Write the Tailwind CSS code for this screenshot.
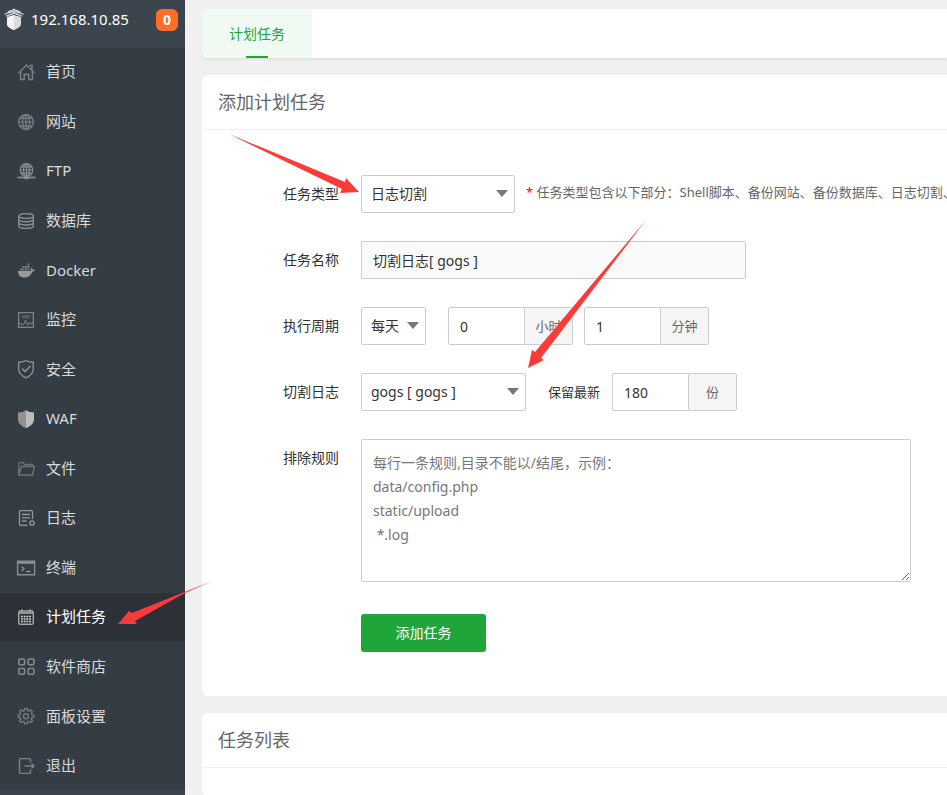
<!DOCTYPE html>
<html lang="zh-CN">
<head>
  <meta charset="UTF-8" />
  <title>计划任务</title>
  <script src="https://cdn.jsdelivr.net/npm/@tailwindcss/browser@4"></script>
</head>
<body class="relative flex min-h-screen overflow-x-hidden bg-[#f0f0f0] font-['Noto_Sans','Noto_Sans_CJK_SC',sans-serif] text-sm text-[#333]">
  <!-- Sidebar -->
  <aside class="flex w-[185px] shrink-0 flex-col bg-[#3c444d] pb-1.5 text-[#d8dadc]">
    <div class="flex h-12 items-start pt-2 pl-1 pr-[7px]">
      <svg class="h-[22px] w-5 shrink-0" viewBox="0 0 20 22" fill="none">
        <path d="M3 8.500 10 7l7 1.500V16c0 3-3.500 4.500-7 6-3.500-1.500-7-3-7-6z" fill="#dcdcdc" />
        <path d="M10 7v15c-3.500-1.500-7-3-7-6V8.500z" fill="#f4f4f4" />
        <path d="M1 9.300 10 6l9 3.300" stroke="#3c444d" stroke-width="1.200" />
        <path d="M3.500 4 10 1.500 16.500 4M.5 6.200 10 3l9.500 3.200M2 8.300l8-3 8 3" stroke="#eee" stroke-width="1.100" />
        <path d="m6 2.500 9 4M14 2.500l-9 4M10 .5v5" stroke="#d0d0d0" stroke-width=".8" />
      </svg>
      <span class="ml-[7px] text-[15px] leading-[22px] text-white">192.168.10.85</span>
      <a href="#" class="mt-px ml-auto h-[22px] w-[22px] rounded-md bg-[#ff6d27] text-center text-sm leading-[22px] font-bold text-white">0</a>
    </div>

    <nav class="flex flex-1 flex-col justify-between bg-[#353d44] text-[15px]">
      <a href="#" class="flex h-12 items-center gap-3 pl-[18px]">
        <svg class="size-4 overflow-visible" viewBox="0 0 16 16" fill="none" stroke="#7d8286" stroke-width="1.400"><path d="M.5 9 8.500 1l8 8M2.600 7.500v8h3.600v-5h4.600v5h3.600v-8M11.500 1.500h2.500v4" /></svg>
        首页
      </a>
      <a href="#" class="flex h-12 items-center gap-3 pl-[18px]">
        <svg class="size-4" viewBox="0 0 16 16" fill="none" stroke="#7d8286" stroke-width="1.200"><circle cx="8" cy="8" r="7.400" /><ellipse cx="8" cy="8" rx="3.500" ry="7.400" /><path d="M8 .5v15M.5 8h15M1.700 4.200h12.600M1.700 11.800h12.600" /></svg>
        网站
      </a>
      <a href="#" class="flex h-12 items-center gap-3 pl-[18px]">
        <svg class="size-4 overflow-visible" viewBox="0 0 16 16" fill="none" stroke="#8a8e91" stroke-width="1.200"><circle cx="8.500" cy="7" r="6.300" /><ellipse cx="8.500" cy="7" rx="3" ry="6.300" /><path d="M8.500.5v14M2 7h13M3 3.800h11M3 10.200h11" /><path d="M-.5 14.500h18" stroke-width="1.800" /><path d="M6.500 15h4" stroke-width="2.400" /></svg>
        FTP
      </a>
      <a href="#" class="flex h-12 items-center gap-3 pl-[18px]">
        <svg class="size-4" viewBox="0 0 16 16" fill="none" stroke="#8a8e91" stroke-width="1.400"><ellipse cx="8" cy="3" rx="7.300" ry="2.400" /><path d="M.7 3v10c0 1.300 3.200 2.400 7.300 2.400s7.300-1.100 7.300-2.400V3M.7 6.300c0 1.300 3.200 2.400 7.300 2.400s7.300-1.100 7.300-2.400M.7 9.600C.7 11 3.900 12 8 12s7.300-1 7.300-2.400" /></svg>
        数据库
      </a>
      <a href="#" class="flex h-12 items-center gap-3 pl-[18px]">
        <svg class="size-4 overflow-visible" viewBox="0 0 16 16" fill="#999"><path d="M0 9h12.500c.7-.6.600-1.700.2-2.600l.8-.7c.8.600 1.200 1.200 1.300 2 .8-.2 1.700 0 2.200.3-.4 1-1.500 1.500-2.700 1.500-1.300 4-3.800 6-7.800 6S0 13.500 0 9z" /><path d="M2 6.500h2v2H2zM4.500 6.500h2v2h-2zM7 6.500h2v2H7zM9.500 6.500h2v2h-2zM4.500 4h2v2h-2zM7 4h2v2H7zM9.500 4h2v2h-2zM9.500 1.500h2v2h-2z" opacity=".7" /></svg>
        Docker
      </a>
      <a href="#" class="flex h-12 items-center gap-3 pl-[18px]">
        <svg class="size-4" viewBox="0 0 16 16" fill="none" stroke="#7d8286"><path d="M.6.6h14.800v14.800H.6z" stroke-width="1.400" /><path d="M4.500 3.500h7v2.500h-7z" fill="#555d63" stroke="#555d63" /><path d="M1 11.500h2l1 2 2-1.500L7.500 8l2 5.500 1.500-3 1.500 2 1-2H15" /></svg>
        监控
      </a>
      <a href="#" class="flex h-12 items-center gap-3 pl-[18px]">
        <svg class="size-4 overflow-visible" viewBox="0 0 16 16" fill="none" stroke="#8a8e91" stroke-width="1.400"><path d="M8-.5C6 .8 3.500 1.300.7 1.300V8c0 4.500 3.300 7 7.300 8.800 4-1.800 7.300-4.300 7.300-8.800V1.300C12.500 1.300 10 .8 8-.5z" /><path d="m4 7.500 3 3 5.500-5.500" stroke-width="1.700" /></svg>
        安全
      </a>
      <a href="#" class="flex h-12 items-center gap-3 pl-[18px]">
        <svg class="size-4 overflow-visible" viewBox="0 0 16 16"><path d="M8-1C6 .8 3 1.500 0 1.500V8c0 5 4 7.500 8 9z" fill="#929292" /><path d="M8-1c2 1.800 5 2.500 8 2.500V8c0 5-4 7.500-8 9z" fill="#bcbcbc" /></svg>
        WAF
      </a>
      <a href="#" class="flex h-12 items-center gap-3 pl-[18px]">
        <svg class="size-4 overflow-visible" viewBox="0 0 16 16" fill="none" stroke="#6d7377" stroke-width="1.400" stroke-linejoin="round"><path d="M.8 14V2.500c0-.5.400-.9 1-.9h3.500l1 1.900h7.200c.6 0 1 .4 1 1v1M.8 14 3.500 5.500h13L14.500 14z" /></svg>
        文件
      </a>
      <a href="#" class="flex h-12 items-center gap-3 pl-[18px]">
        <svg class="size-4 overflow-visible" viewBox="0 0 16 16" fill="none" stroke="#95989b" stroke-width="1.300"><path d="M9.500 15.300h-7c-.6 0-1-.4-1-1V1.700c0-.6.400-1 1-1h11c.6 0 1 .4 1 1V9M4 4.500h8M4 7.800h8M4 11h4.500" /><circle cx="14" cy="13" r="2.200" /></svg>
        日志
      </a>
      <a href="#" class="flex h-12 items-center gap-3 pl-[18px]">
        <svg class="size-4 overflow-visible" viewBox="0 0 16 16" fill="none" stroke="#8a8e91" stroke-width="1.400"><path d="M-.4 1.200h17v13.600h-17z" /><path d="M0 2.500h16" stroke-width="2.800" /><path d="m3.500 6.500 2.500 2.200L3.500 11M8 11.500h4.500" /></svg>
        终端
      </a>
      <a href="#" class="flex h-12 items-center gap-3 bg-[#2c3138] pl-[18px] text-white">
        <svg class="size-4" viewBox="0 0 16 16" fill="none" stroke="#a5a7a9" stroke-width="1.400"><rect x=".7" y="2" width="14.600" height="13.300" rx="1.500" /><path d="M.6 4h14.800" stroke-width="1.700" /><path d="M4 .3v3M12 .3v3" stroke-width="1.500" /><path d="M3 7.500h10M3 10h10M3 12.500h10" stroke-width="1.700" stroke-dasharray="1.800 .9" stroke="#ddd" /></svg>
        计划任务
      </a>
      <a href="#" class="flex h-12 items-center gap-3 pl-[18px]">
        <svg class="size-4 overflow-visible" viewBox="0 0 16 16" fill="none" stroke="#85898c" stroke-width="1.600"><rect x=".8" y="0" width="5.800" height="5.800" rx="1.200" /><rect x="10.200" y="0" width="5.800" height="5.800" rx="1.200" /><rect x=".8" y="9.500" width="5.800" height="5.800" rx="1.200" /><rect x="10.200" y="9.500" width="5.800" height="5.800" rx="1.200" /></svg>
        软件商店
      </a>
      <a href="#" class="flex h-12 items-center gap-3 pl-[18px]">
        <svg class="size-4 overflow-visible" viewBox="0 0 16 16" fill="none" stroke="#747a7e" stroke-width="1.400" stroke-linejoin="round"><path d="M6.700.5h2.600l.4 2 1.300.6 1.800-1.200 1.700 1.800L13.300 5.500l.5 1.200 2 .3v2.200l-2 .5-.5 1.300 1.200 1.700-1.800 1.800-1.700-1.200-1.300.6-.4 2H6.700l-.4-2-1.300-.6-1.700 1.200-1.800-1.800L2.700 11l-.5-1.300-2-.5V7l2-.3.500-1.200L1.500 3.700l1.700-1.800L5 3.100l1.300-.6z" /><circle cx="8" cy="8.200" r="2.500" /></svg>
        面板设置
      </a>
      <a href="#" class="flex h-12 items-center gap-3 pl-[18px]">
        <svg class="size-4 overflow-visible" viewBox="0 0 16 16" fill="none" stroke="#7d8286" stroke-width="1.400"><path d="M12.500 4.500V1.600c0-.6-.4-1-1-1h-9c-.6 0-1 .4-1 1v12.800c0 .6.400 1 1 1h9c.6 0 1-.4 1-1v-2.900M6.500 8h9M13.500 5.500 16 8l-2.500 2.500" /></svg>
        退出
      </a>
    </nav>
  </aside>

  <main class="min-w-0 flex-1 pt-[9px] pl-[17px]">
    <div class="flex rounded-l-md bg-white shadow-[0_2px_2px_rgba(0,0,0,0.06)]">
      <a href="#" class="flex h-[49px] w-[110px] flex-col items-center justify-between rounded-l-md bg-[#f0f9f2] pt-[3px] text-[#20a53a]">
        <span class="leading-[44px]">计划任务</span>
        <span class="h-0.5 w-[22px] shrink-0 bg-[#20a53a]"></span>
      </a>
    </div>

    <section class="mt-[17px] overflow-hidden rounded-l-md bg-white pb-11">
      <h2 class="border-b border-[#eee] pl-4 text-lg leading-[54px] text-[#666]">添加计划任务</h2>

      <form class="flex flex-col gap-7 pt-[45px]">
        <div class="flex h-[38px] items-center whitespace-nowrap">
          <label for="taskType" class="mr-[22px] w-[137px] shrink-0 text-right">任务类型</label>
          <div class="relative shrink-0">
            <select id="taskType" class="h-[38px] w-[154px] appearance-none rounded-xs border border-[#ccc] bg-white pl-[9px]">
              <option>日志切割</option>
            </select>
            <svg class="pointer-events-none absolute top-[15px] right-[7px] h-[7px] w-3" viewBox="0 0 12 7"><path d="M0 0h12L6 7z" fill="#777" /></svg>
          </div>
          <p class="ml-[11px] pb-1 text-[13px] text-[#666]"><span class="text-[#f00]">*</span> 任务类型包含以下部分：Shell脚本、备份网站、备份数据库、日志切割、释放内存</p>
        </div>

        <div class="flex h-[38px] items-center">
          <label for="taskName" class="mr-[22px] w-[137px] shrink-0 text-right">任务名称</label>
          <input id="taskName" type="text" readonly value="切割日志[ gogs ]" class="h-[38px] w-[385px] rounded-xs border border-[#ccc] bg-[#fafafa] px-[11px]" />
        </div>

        <div class="flex h-[38px] items-center">
          <label for="cycle" class="mr-[22px] w-[137px] shrink-0 text-right">执行周期</label>
          <div class="relative shrink-0">
            <select id="cycle" class="h-[38px] w-[65px] appearance-none rounded-xs border border-[#ccc] bg-white pl-[9px]">
              <option>每天</option>
            </select>
            <svg class="pointer-events-none absolute top-[15px] right-[7px] h-[7px] w-3" viewBox="0 0 12 7"><path d="M0 0h12L6 7z" fill="#777" /></svg>
          </div>
          <div class="ml-[22px] flex">
            <input id="hour" type="text" value="0" class="h-[38px] w-[77px] rounded-l-xs border border-[#ccc] px-[11px]" />
            <label for="hour" class="-ml-px h-[38px] w-[49px] rounded-r-xs border border-[#ccc] bg-[#f5f5f5] text-center text-[13px] leading-9 text-[#666]">小时</label>
          </div>
          <div class="ml-[11px] flex">
            <input id="minute" type="text" value="1" class="h-[38px] w-[77px] rounded-l-xs border border-[#ccc] px-[11px]" />
            <label for="minute" class="-ml-px h-[38px] w-[49px] rounded-r-xs border border-[#ccc] bg-[#f5f5f5] text-center text-[13px] leading-9 text-[#666]">分钟</label>
          </div>
        </div>

        <div class="flex h-[38px] items-center">
          <label for="site" class="mr-[22px] w-[137px] shrink-0 text-right">切割日志</label>
          <div class="relative shrink-0">
            <select id="site" class="h-[38px] w-[165px] appearance-none rounded-xs border border-[#ccc] bg-white pl-[9px]">
              <option>gogs [ gogs ]</option>
            </select>
            <svg class="pointer-events-none absolute top-[15px] right-[7px] h-[7px] w-3" viewBox="0 0 12 7"><path d="M0 0h12L6 7z" fill="#777" /></svg>
          </div>
          <label for="keep" class="ml-[22px] text-[13px]">保留最新</label>
          <div class="ml-3 flex">
            <input id="keep" type="text" value="180" class="h-[38px] w-[77px] rounded-l-xs border border-[#ccc] px-[11px]" />
            <label for="keep" class="-ml-px h-[38px] w-[49px] rounded-r-xs border border-[#ccc] bg-[#f5f5f5] text-center text-[13px] leading-9 text-[#666]">份</label>
          </div>
        </div>

        <div class="flex items-start">
          <label for="exclude" class="mr-[22px] w-[137px] shrink-0 text-right leading-[38px]">排除规则</label>
          <textarea id="exclude" class="h-[143px] w-[550px] rounded-xs border border-[#ccc] p-[11px] leading-6 placeholder:text-[#777]" placeholder="每行一条规则,目录不能以/结尾，示例：&#10;data/config.php&#10;static/upload&#10; *.log"></textarea>
        </div>

        <button type="button" class="mt-1 ml-[159px] h-[38px] w-[125px] rounded-[3px] bg-[#20a53a] text-white">添加任务</button>
      </form>
    </section>

    <section class="mt-[17px] rounded-l-md bg-white pb-7">
      <h2 class="border-b border-[#eee] pl-4 text-lg leading-[54px] text-[#666]">任务列表</h2>
    </section>
  </main>

  <!-- Annotation arrows -->
  <svg class="pointer-events-none absolute top-0 left-0 h-[795px] w-[947px]" viewBox="0 0 947 795" fill="#fc3a38">
    <path d="M229 134 345 182 346 178 359 192 340 193 342 189z" />
    <path d="M646 220 535 352 532 350 528 368 544 360 541 358z" />
    <path d="M212 581 132 613 129 611 118 624 137 624 135 621 185 593z" />
  </svg>
</body>
</html>
